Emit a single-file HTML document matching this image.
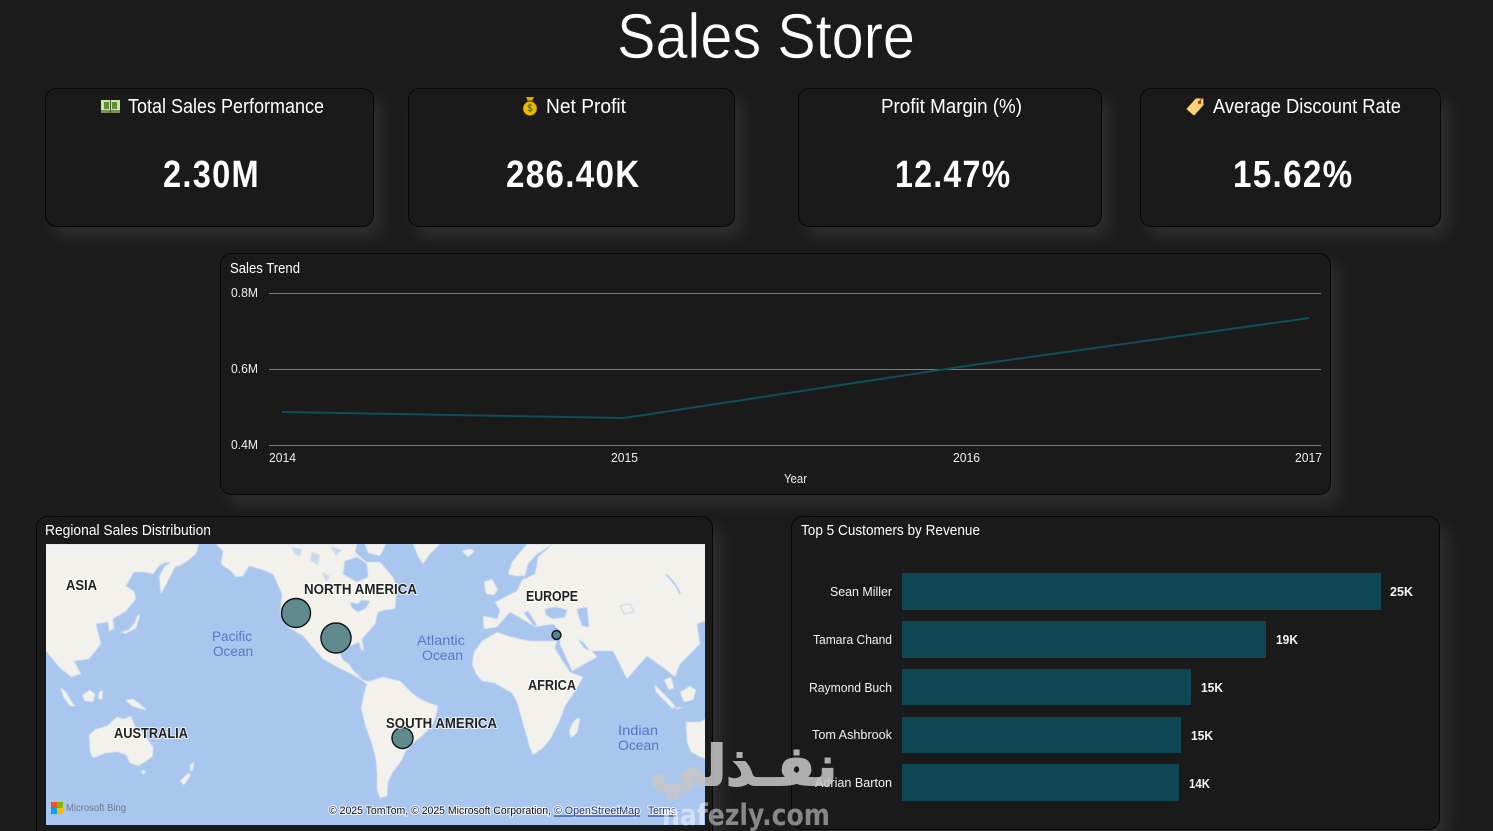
<!DOCTYPE html>
<html lang="en">
<head>
<meta charset="utf-8">
<title>Sales Store</title>
<style>
html,body{margin:0;padding:0;background:#1b1b1b;width:1493px;height:831px;overflow:hidden}
svg{display:block}
text{font-family:"Liberation Sans","DejaVu Sans",sans-serif;fill:#fff}
.card{fill:#1a1a1a;stroke:#070707;stroke-width:1;filter:drop-shadow(8px 10px 8px rgba(255,255,255,.085))}
.kt{font-size:20px}
.kv{font-family:"Liberation Sans Narrow","Liberation Sans",sans-serif;font-size:38px;font-weight:bold;letter-spacing:1.500px}
.ct{font-size:14.5px}
.ax{font-size:12.5px;fill:#eee}
.nm{font-size:13px;fill:#f2f2f2}
.vl{font-size:13px;font-weight:bold;fill:#f5f5f5}
.land{fill:#f2f1ec}
.wat{fill:#a9c6ef}
.lb{font-size:14.5px;font-weight:bold;fill:#222;stroke:#fff;stroke-opacity:.75;stroke-width:2px;paint-order:stroke}
.oc{font-size:14px;fill:#5a76c4}
.at{font-size:11px;fill:#111;stroke:#fff;stroke-opacity:.8;stroke-width:2px;paint-order:stroke}
.bub{fill:#46787d;fill-opacity:.85;stroke:#0b1416;stroke-width:1.4}
.bar{fill:#0e4753}
</style>
</head>
<body>
<svg width="1493" height="831" viewBox="0 0 1493 831" xmlns="http://www.w3.org/2000/svg">
<defs><clipPath id="mc"><rect x="46" y="544" width="659" height="281"/></clipPath></defs>
<rect width="1493" height="831" fill="#1b1b1b"/>

<text x="617" y="58" font-size="63" textLength="298" lengthAdjust="spacingAndGlyphs" stroke="#1b1b1b" stroke-width=".6">Sales Store</text>

<rect class="card" x="45.500" y="88.500" width="328" height="138" rx="11"/>
<rect class="card" x="408.500" y="88.500" width="326" height="138" rx="11"/>
<rect class="card" x="798.500" y="88.500" width="303" height="138" rx="11"/>
<rect class="card" x="1140.500" y="88.500" width="300" height="138" rx="11"/>

<g>
<rect x="101" y="100" width="19" height="13" fill="#cfe3a6"/>
<rect x="101" y="110" width="19" height="3" fill="#7d8f5e"/>
<rect x="104" y="102" width="5" height="7" fill="#5f8f3a"/>
<rect x="112" y="102" width="5" height="7" fill="#5f8f3a"/>
<rect x="110" y="100" width="1" height="13" fill="#44552f"/>
</g>
<text class="kt" x="128" y="113" textLength="196" lengthAdjust="spacingAndGlyphs">Total Sales Performance</text>

<g>
<path d="M526 97h8l-2 4h-4z" fill="#e2a800"/>
<ellipse cx="530" cy="108.500" rx="6.800" ry="7" fill="#f2b705" stroke="#9a6b00" stroke-width=".6"/>
<rect x="527" y="100.500" width="6" height="1.500" fill="#7a5200"/>
<path d="M532 105.500c-1-1-4-1-4 .8 0 2 4 1 4 3.200 0 1.800-3 1.800-4.200.6M530 103.500v9" fill="none" stroke="#3f7a1a" stroke-width="1"/>
</g>
<text class="kt" x="546" y="113" textLength="80" lengthAdjust="spacingAndGlyphs">Net Profit</text>

<text class="kt" x="881" y="113" textLength="141" lengthAdjust="spacingAndGlyphs">Profit Margin (%)</text>

<g>
<path d="M1196 98.500l7 0 .5 6.500-9.500 10.500-7.500-6.500z" fill="#fbd27a" stroke="#d9a84c" stroke-width=".5"/>
<circle cx="1199.500" cy="102.500" r="1.700" fill="#b3421c"/>
<path d="M1199.500 102c1-3 3-5 4.500-3.500" fill="none" stroke="#5a2a14" stroke-width=".8"/>
</g>
<text class="kt" x="1213" y="113" textLength="188" lengthAdjust="spacingAndGlyphs">Average Discount Rate</text>

<text class="kv" x="163" y="187" textLength="97" lengthAdjust="spacingAndGlyphs">2.30M</text>
<text class="kv" x="506" y="187" textLength="134.500" lengthAdjust="spacingAndGlyphs">286.40K</text>
<text class="kv" x="895" y="187" textLength="116.500" lengthAdjust="spacingAndGlyphs">12.47%</text>
<text class="kv" x="1233" y="187" textLength="120.500" lengthAdjust="spacingAndGlyphs">15.62%</text>

<rect class="card" x="220.500" y="253.500" width="1110" height="241" rx="11"/>
<text class="ct" x="230" y="273" textLength="70" lengthAdjust="spacingAndGlyphs">Sales Trend</text>
<text class="ax" x="231" y="297" textLength="27" lengthAdjust="spacingAndGlyphs">0.8M</text>
<text class="ax" x="231" y="373" textLength="27" lengthAdjust="spacingAndGlyphs">0.6M</text>
<text class="ax" x="231" y="449" textLength="27" lengthAdjust="spacingAndGlyphs">0.4M</text>
<g stroke="#7c7c7c" stroke-width="1">
<line x1="269" y1="293.500" x2="1321" y2="293.500"/>
<line x1="269" y1="369.500" x2="1321" y2="369.500"/>
<line x1="269" y1="445.500" x2="1321" y2="445.500"/>
</g>
<polyline points="282,412 624,418 966,366 1309,318" fill="none" stroke="#0f4d5a" stroke-width="2"/>
<text class="ax" x="269" y="462" textLength="27" lengthAdjust="spacingAndGlyphs">2014</text>
<text class="ax" x="611" y="462" textLength="27" lengthAdjust="spacingAndGlyphs">2015</text>
<text class="ax" x="953" y="462" textLength="27" lengthAdjust="spacingAndGlyphs">2016</text>
<text class="ax" x="1295" y="462" textLength="27" lengthAdjust="spacingAndGlyphs">2017</text>
<text class="ax" x="784" y="483" textLength="23" lengthAdjust="spacingAndGlyphs">Year</text>

<rect class="card" x="36.500" y="516.500" width="676" height="330" rx="11"/>
<text class="ct" x="45" y="535" textLength="166" lengthAdjust="spacingAndGlyphs">Regional Sales Distribution</text>

<g clip-path="url(#mc)">
<rect x="46" y="544" width="659" height="281" fill="#a9c6ef"/>
<g style="filter:blur(.5px)">
<!-- East Asia -->
<path class="land" d="M40 544H199L196 554 186 562 179 566 174 567 171 562 164 563 159 566 153 574 144 572 134 572 126 586 134 591 136 599 126 611 113 619 114 629 109 631 108 622 96 624 101 644 89 659 74 661 81 674 71 677 59 667 46 651 40 648Z"/>
<path class="land" d="M171 562 176 565 168 581 161 594 159 577 164 567Z"/>
<path class="land" d="M121 632 128 630 134 624 138 614 140 616 136 628 125 634Z"/>
<path class="land" d="M60 687 66 692 73 704 76 706 70 706 64 698Z M82 695 90 690 95 694 93 702 85 701Z M99 692 103 690 102 700 98 698Z"/>
<path class="land" d="M125 700 133 699 139 703 147 710 141 709 132 706Z"/>
<!-- Australia -->
<path class="land" d="M89 735 96 729 107 726 117 717 124 719 131 716 135 726 143 733 153 747 153 756 145 762 138 766 130 763 126 755 118 752 106 753 93 758 90 752Z"/>
<path class="land" d="M141 770 146 771 143 775Z M180 781 188 773 191 775 184 785Z M190 765 194 762 193 770 190 771Z"/>
<!-- North America -->
<path class="land" d="M216 544H357L355 552 366 562 380 562 393 577 397 587 395 609 385 610 378 612 375 624 362 639 364 651 361 650 359 642 345 648 340 654 343 660 349 664 353 670 357 674 364 681 372 684 368 685 357 677 337 667 323 659 303 636 288 627 280 614 282 594 273 574 260 569 249 566 243 576 236 577 232 572 221 564 223 551Z"/>
<path class="wat" d="M345 561 357 557 367 564 368 577 357 582 343 574Z"/>
<path class="land" d="M365 544H386L380 556 368 553Z"/>
<path class="wat" d="M350 602 358 604 362 600 370 601 366 608 358 612 352 608Z"/>
<path class="wat" d="M292 547 302 549 300 556 294 554Z M312 552 320 555 318 565 310 560Z M330 546 342 550 336 556Z M322 572 330 576 326 582Z" opacity=".55"/>
<path class="land" d="M413 544H440L430 554 423 564 418 556Z"/>
<path class="land" d="M462 551 470 549 475 551 468 557Z"/>
<path class="land" d="M362 680 372 682 378 685 370 686Z"/>
<!-- South America -->
<path class="land" d="M366 686 370 681 383 677 400 681 413 694 424 701 438 706 436 716 432 726 422 736 412 744 405 752 402 760 393 772 388 782 387 796 380 798 377 790 377 774 376 760 372 744 366 728 361 708 364 694Z"/>
<!-- Africa -->
<path class="land" d="M472 664 474 652 482 641 497 632 508 636 520 639 530 641 540 641 557 641 555 648 562 660 570 672 583 677 576 690 565 706 560 720 551 738 543 748 533 755 530 748 527 738 522 720 517 702 512 693 503 688 495 683 482 681 476 674Z"/>
<path class="land" d="M577 718 580 719 577 733 571 738 569 731 572 724Z"/>
<!-- Eurasia -->
<path class="land" d="M553 544H710V621H705L697 624 700 644 680 664 675 677 665 669 647 656 627 679 613 651 592 651 597 657 572 671 560 644 560 631 553 624 535 627 527 622 510 612 497 627 484 629 483 616 497 619 500 611 495 602 507 596 517 591 522 580 535 574 538 557Z"/>
<!-- Scandinavia and Britain -->
<path class="land" d="M508 574 512 562 527 544H553L537 554 528 564 525 576 516 576Z"/>
<path class="land" d="M484 582 492 579 498 590 494 595 486 594Z"/>
<path class="wat" d="M545 609 556 607 567 610 565 617 553 619 546 615Z"/>
<path class="wat" d="M577 609 587 607 589 627 582 626 579 617Z"/>
<path class="wat" d="M578 639 583 642 590 651 584 648Z"/>
<path class="wat" d="M524 613 528 611 537 625 534 626Z"/>
<path d="M666 574C672 580 678 588 680 594" fill="none" stroke="#a9c6ef" stroke-width="1.500"/>
<path d="M620 606 630 604 634 612 624 614Z" fill="none" stroke="#c2d4ee" stroke-width="1"/>
<!-- SE Asia right -->
<path class="land" d="M654 684 660 690 670 700 677 709 685 707 672 708 664 700 656 692Z"/>
<path class="land" d="M680 692 690 686 696 690 693 700 684 702Z"/>
<path class="land" d="M686 722 700 722 710 716V760L700 757 691 752 687 742Z"/>
<path class="land" d="M664 680 671 677 674 688 669 690Z"/>
</g>
</g>

<circle class="bub" cx="296" cy="613" r="14.500"/>
<circle class="bub" cx="336" cy="638" r="15"/>
<circle class="bub" cx="402.500" cy="738" r="10.500"/>
<circle class="bub" cx="556.500" cy="635" r="4.500"/>

<text class="lb" x="66" y="590" textLength="31" lengthAdjust="spacingAndGlyphs">ASIA</text>
<text class="lb" x="304" y="594" textLength="113" lengthAdjust="spacingAndGlyphs">NORTH AMERICA</text>
<text class="lb" x="526" y="601" textLength="52" lengthAdjust="spacingAndGlyphs">EUROPE</text>
<text class="lb" x="528" y="690" textLength="48" lengthAdjust="spacingAndGlyphs">AFRICA</text>
<text class="lb" x="386" y="728" textLength="111" lengthAdjust="spacingAndGlyphs">SOUTH AMERICA</text>
<text class="lb" x="114" y="738" textLength="74" lengthAdjust="spacingAndGlyphs">AUSTRALIA</text>
<text class="oc" x="212" y="641" textLength="40" lengthAdjust="spacingAndGlyphs">Pacific</text>
<text class="oc" x="213" y="656" textLength="40" lengthAdjust="spacingAndGlyphs">Ocean</text>
<text class="oc" x="417" y="645" textLength="48" lengthAdjust="spacingAndGlyphs">Atlantic</text>
<text class="oc" x="422" y="660" textLength="41" lengthAdjust="spacingAndGlyphs">Ocean</text>
<text class="oc" x="618" y="735" textLength="40" lengthAdjust="spacingAndGlyphs">Indian</text>
<text class="oc" x="618" y="750" textLength="41" lengthAdjust="spacingAndGlyphs">Ocean</text>

<rect x="51" y="802" width="6" height="6" fill="#f25022"/>
<rect x="57" y="802" width="6" height="6" fill="#7fba00"/>
<rect x="51" y="808" width="6" height="6" fill="#00a4ef"/>
<rect x="57" y="808" width="6" height="6" fill="#ffb900"/>
<text x="66" y="811" font-size="10" style="fill:#6f7a88" textLength="60" lengthAdjust="spacingAndGlyphs">Microsoft Bing</text>
<text class="at" x="329" y="814" textLength="222" lengthAdjust="spacingAndGlyphs">© 2025 TomTom, © 2025 Microsoft Corporation,</text>
<text class="at" x="554" y="814" textLength="86" lengthAdjust="spacingAndGlyphs" style="fill:#1a2f7a">© OpenStreetMap</text>
<line x1="554" y1="816" x2="640" y2="816" stroke="#1a2f7a"/>
<text class="at" x="648" y="814" textLength="28" lengthAdjust="spacingAndGlyphs" style="fill:#1a2f7a">Terms</text>
<line x1="648" y1="816" x2="676" y2="816" stroke="#1a2f7a"/>

<rect class="card" x="791.500" y="516.500" width="648" height="313" rx="11"/>
<text class="ct" x="801" y="535" textLength="179" lengthAdjust="spacingAndGlyphs">Top 5 Customers by Revenue</text>

<rect class="bar" x="902" y="573" width="479" height="37"/>
<rect class="bar" x="902" y="621" width="364" height="37"/>
<rect class="bar" x="902" y="669" width="289" height="36"/>
<rect class="bar" x="902" y="717" width="279" height="36"/>
<rect class="bar" x="902" y="764" width="277" height="37"/>

<text class="nm" x="830" y="596" textLength="62" lengthAdjust="spacingAndGlyphs">Sean Miller</text>
<text class="nm" x="813" y="644" textLength="79" lengthAdjust="spacingAndGlyphs">Tamara Chand</text>
<text class="nm" x="809" y="692" textLength="83" lengthAdjust="spacingAndGlyphs">Raymond Buch</text>
<text class="nm" x="812" y="739" textLength="80" lengthAdjust="spacingAndGlyphs">Tom Ashbrook</text>
<text class="nm" x="815" y="787" textLength="77" lengthAdjust="spacingAndGlyphs">Adrian Barton</text>
<text class="vl" x="1390" y="596" textLength="23" lengthAdjust="spacingAndGlyphs">25K</text>
<text class="vl" x="1276" y="644" textLength="22" lengthAdjust="spacingAndGlyphs">19K</text>
<text class="vl" x="1201" y="692" textLength="22" lengthAdjust="spacingAndGlyphs">15K</text>
<text class="vl" x="1191" y="740" textLength="22" lengthAdjust="spacingAndGlyphs">15K</text>
<text class="vl" x="1189" y="788" textLength="21" lengthAdjust="spacingAndGlyphs">14K</text>

<!-- watermark -->
<text x="837" y="785" font-size="55" font-weight="bold" text-anchor="start" direction="rtl" opacity=".85" stroke="#c8c8c8" stroke-width="2" style="font-family:'DejaVu Sans',sans-serif;fill:#c8c8c8">نفـذلي</text>
<text x="662" y="825" font-size="29" font-weight="bold" textLength="168" lengthAdjust="spacingAndGlyphs" style="font-family:'DejaVu Sans',sans-serif;fill:#fff;fill-opacity:.48">nafezly.com</text>
</svg>
</body>
</html>
